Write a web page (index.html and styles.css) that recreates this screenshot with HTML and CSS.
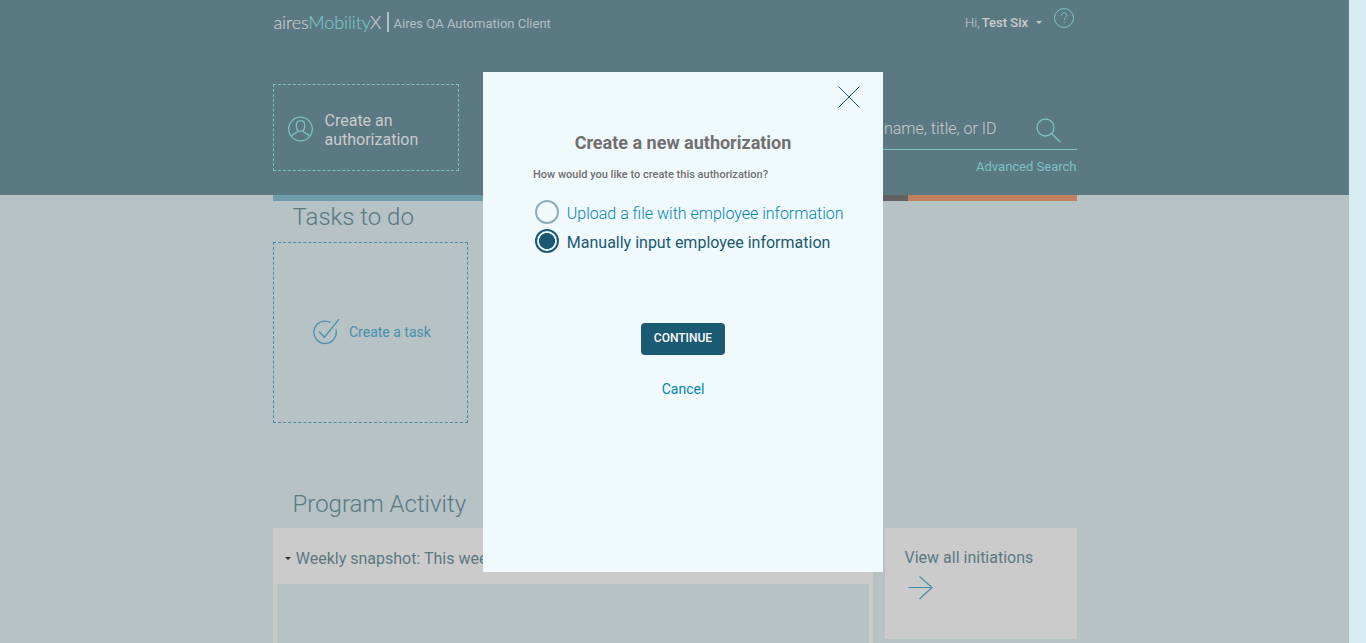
FILE: index.html
```html
<!DOCTYPE html>
<html lang="en">
<head>
<meta charset="utf-8">
<title>airesMobilityX</title>
<link rel="stylesheet" href="styles.css">
</head>
<body>
<div class="page">
  <header class="header">
    <div class="container">
      <div class="topbar">
        <div class="logo">aires<span class="logo-accent">Mobility</span>X</div>
        <span class="logo-divider"></span>
        <div class="client">Aires QA Automation Client</div>
        <div class="user"><span class="hi">Hi,</span><span class="user-name">Test Six</span><span class="caret"></span></div>
        <svg class="help" width="22" height="22" viewBox="0 0 22 22"><circle cx="11" cy="11" r="9.5"/><path d="M8.3 8.6C8.3 4.8 13.8 4.8 13.8 8.3C13.8 10.6 11.2 10.4 11.2 13.3M11.2 14.8V16.2"/></svg>
      </div>
      <div class="actions">
        <a class="create-auth">
          <svg class="icon-user" width="26" height="26" viewBox="0 0 26 26"><circle cx="12.5" cy="13" r="11.8"/><path d="M12.5 4.7C9.7 4.7 8.3 6.7 8.3 9.3C8.3 11.8 9.1 14.6 10.8 15.1H14.2C15.9 14.6 16.7 11.8 16.7 9.3C16.7 6.7 15.3 4.7 12.5 4.7ZM10.3 15C8.5 17.2 5.5 17.2 3.5 20.2M14.7 15C16.5 17.2 19.5 17.2 21.5 20.2"/></svg>
          <span>Create an<br>authorization</span>
        </a>
        <div class="search">
          <div class="search-field">
            <span class="placeholder">name, title, or ID</span>
            <svg class="icon-search" width="26" height="26" viewBox="0 0 26 26"><circle cx="9.5" cy="9.5" r="8.5"/><path d="M15.2 15.2L24.5 24.3"/></svg>
          </div>
          <a class="advanced">Advanced Search</a>
        </div>
      </div>
    </div>
  </header>
  <main class="container">
    <div class="stripe"><span class="s-blue"></span><span class="s-gray"></span><span class="s-orange"></span></div>
    <h2 class="title tasks-title">Tasks to do</h2>
    <a class="create-task">
      <svg width="28" height="28" viewBox="0 0 28 28"><path d="M17.6 4.6A11.2 11.2 0 1 0 22.9 11.5M6 13.5L11.5 19.2L26 1.2"/></svg>
      <span>Create a task</span>
    </a>
    <h2 class="title program-title">Program Activity</h2>
    <div class="panels">
      <section class="snapshot">
        <div class="snapshot-head"><span class="caret"></span>Weekly snapshot: This week</div>
        <div class="snapshot-body"></div>
      </section>
      <section class="initiations">
        <div>View all initiations</div>
        <svg width="26" height="26" viewBox="0 0 26 26"><path d="M.5 12.5H24M11.5 1.5L24 12.5L11.5 24"/></svg>
      </section>
    </div>
  </main>
</div>
<div class="modal" role="dialog">
  <svg class="close" width="22" height="22" viewBox="0 0 22 22"><path d="M.5 .5L21.5 21.5M21.5 .5L.5 21.5"/></svg>
  <h1 class="modal-title">Create a new authorization</h1>
  <p class="question">How would you like to create this authorization?</p>
  <div class="option"><span class="radio"></span><span class="label">Upload a file with employee information</span></div>
  <div class="option selected"><span class="radio"></span><span class="label">Manually input employee information</span></div>
  <button class="continue">CONTINUE</button>
  <a class="cancel">Cancel</a>
</div>
</body>
</html>
```
FILE: styles.css
```css
* { box-sizing: border-box; }
body { margin: 0; height: 643px; overflow: hidden; background: #d6ebf2; font-family: Roboto, "Liberation Sans", sans-serif; }
svg { fill: none; flex: none; }
.page { width: 1349px; height: 643px; overflow: hidden; background: #b6c2c4; }
.container { width: 804px; margin-left: 272.5px; }
.header { height: 195px; background: #5a7983; }
.topbar { display: flex; height: 84px; align-items: flex-start; color: #bfc7ca; }
.logo { width: 108px; margin-top: 11px; padding-left: 1px; font: 300 18px/23px Lato, sans-serif; letter-spacing: -.1px; color: #cbcbcb; white-space: nowrap; -webkit-text-stroke: .2px; }
.logo-accent { color: #7bc2c4; }
.logo-divider { width: 2px; height: 20px; margin: 12px 5px 0 6px; background: #b2bfc3; }
.client { margin-top: 14px; font-size: 13px; line-height: 20px; color: #b2bfc3; }
.user { display: flex; margin: 13px 11px 0 auto; font-size: 13px; line-height: 20px; color: #cbcbcb; }
.hi { font-weight: 300; margin-right: 2px; }
.user-name { font-weight: 500; }
.caret { border: 3px solid transparent; border-top-color: currentColor; border-bottom: 0; }
.user .caret { margin: 8px 0 0 8px; }
.help { margin: 7px 1.5px 0 0; stroke: #7bc2c4; }
.actions { display: flex; justify-content: space-between; }
.create-auth { display: flex; align-items: center; gap: 11px; width: 186px; height: 87px; padding: 3px 0 0 14px; border: 1px dashed #7bc2c4; font-size: 16px; line-height: 19px; color: #cbcbcb; }
.create-auth span { margin-top: 2px; }
.icon-user, .icon-search { stroke: #7bc2c4; stroke-width: 1.3; }
.search { width: 400px; padding-top: 30px; }
.search-field { display: flex; justify-content: flex-end; height: 36px; border-bottom: 1px solid #7bc2c4; padding-right: 15px; }
.placeholder { margin-top: 5px; font-size: 16px; font-weight: 300; line-height: 19px; color: #cbcbcb; }
.icon-search { margin: 4px 0 0 39px; }
.advanced { display: block; margin-top: 8px; text-align: right; font-size: 13px; line-height: 18px; color: #7bc2c4; }
.stripe { display: flex; height: 6px; }
.s-blue { width: 402px; background: #6e9dad; }
.s-gray { width: 233px; background: #616161; }
.s-orange { flex: 1; background: #c47f5e; }
.title { margin: 0; padding-left: 20px; font-size: 24px; font-weight: 300; color: #5a7983; }
.tasks-title { height: 41px; line-height: 32px; }
.create-task { display: flex; align-items: center; width: 195px; height: 181px; padding: 0 0 2px 39px; gap: 8.5px; border: 1px dashed #4a8ba3; font-size: 14px; color: #4591ad; }
.create-task svg { stroke: #4591ad; stroke-width: 1.3; }
.program-title { height: 105px; padding-top: 65px; line-height: 32px; }
.panels { display: flex; justify-content: space-between; align-items: flex-start; font-size: 16px; color: #5a7983; }
.snapshot { width: 600px; height: 130px; padding: 0 4px; background: #cbcbcb; }
.snapshot-head { display: flex; align-items: center; height: 56px; padding: 5px 0 0 8px; gap: 5.3px; }
.snapshot-head .caret { border-top-color: #333; }
.snapshot-body { height: 74px; background: #b6c2c4; }
.initiations { width: 192px; height: 111px; padding: 20px; line-height: 19px; background: #cbcbcb; }
.initiations svg { display: block; margin: 8px 0 0 3px; stroke: #4591ad; stroke-width: 1.2; }
.modal { position: absolute; left: 483px; top: 72px; display: flex; flex-direction: column; width: 400px; height: 500px; padding: 14px 23px 0 50px; background: #f0f9fc; }
.close { align-self: flex-end; stroke: #1a5a72; stroke-width: 1; }
.modal-title { width: 300px; margin: 24px 0 0; text-align: center; font-size: 18px; font-weight: 700; line-height: 22px; color: #707070; }
.question { margin: 13px 0 17px; font-size: 11px; font-weight: 500; line-height: 16px; color: #707070; }
.option { display: flex; height: 29px; padding-left: 2px; font-size: 16px; line-height: 26px; font-weight: 300; color: #0086b3; white-space: nowrap; }
.radio { width: 24px; height: 24px; margin-right: 7.8px; border: 2px solid #8eaebb; border-radius: 50%; }
.label { margin-top: 1px; }
.selected { font-weight: 400; color: #1a5a72; }
.selected .radio { border-color: #1a5a72; background: radial-gradient(circle, #1a5a72 7.7px, transparent 8.3px); }
.continue { width: 84px; height: 32px; margin: 65px 0 0 108px; padding: 0 0 2px; border: 0; border-radius: 4px; background: #1a5a72; color: #fff; font: 500 12px/20px Roboto, sans-serif; }
.cancel { width: 300px; margin-top: 24px; text-align: center; font-size: 14px; line-height: 20px; color: #0086b3; }
```
